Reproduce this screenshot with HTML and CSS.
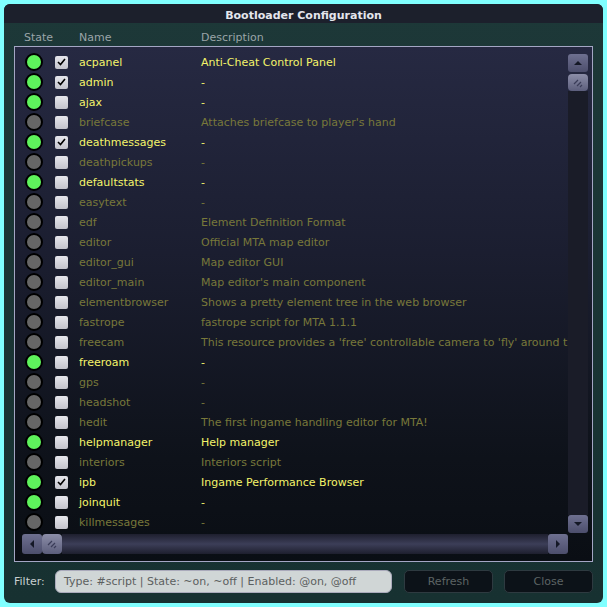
FILE: index.html
```html
<!DOCTYPE html>
<html>
<head>
<meta charset="utf-8">
<link rel="stylesheet" href="styles.css">
</head>
<body>
<div class="window">
  <div class="titlebar">Bootloader Configuration</div>
  <div class="content">
    <div class="colheads">
      <span class="h-state">State</span>
      <span class="h-name">Name</span>
      <span class="h-desc">Description</span>
    </div>
    <div class="gridbox">
      <div class="list" id="list"></div>
      <div class="vscroll">
        <div class="sbtn up"><svg width="10" height="6" viewBox="0 0 10 6"><path d="M1 5 L5 1 L9 5 Z" fill="#141826"/></svg></div>
        <div class="thumb"><svg width="12" height="10" viewBox="0 0 12 10"><path d="M2 6 L6 2 M5 8 L9 4 M8 9 L10 7" stroke="#3a3c58" stroke-width="1.2"/></svg></div>
        <div class="track"></div>
        <div class="sbtn down"><svg width="10" height="6" viewBox="0 0 10 6"><path d="M1 1 L5 5 L9 1 Z" fill="#141826"/></svg></div>
      </div>
      <div class="hscroll">
        <div class="hbtn left"><svg width="6" height="10" viewBox="0 0 6 10"><path d="M5 1 L1 5 L5 9 Z" fill="#141826"/></svg></div>
        <div class="hthumb"><svg width="12" height="10" viewBox="0 0 12 10"><path d="M2 6 L6 2 M5 8 L9 4 M8 9 L10 7" stroke="#3a3c58" stroke-width="1.2"/></svg></div>
        <div class="htrack"></div>
        <div class="hbtn right"><svg width="6" height="10" viewBox="0 0 6 10"><path d="M1 1 L5 5 L1 9 Z" fill="#141826"/></svg></div>
      </div>
    </div>
    <div class="bottom">
      <span class="flabel">Filter:</span>
      <div class="filter">Type: #script | State: ~on, ~off | Enabled: @on, @off</div>
      <div class="btn">Refresh</div>
      <div class="btn">Close</div>
    </div>
  </div>
</div>
<script src="app.js"></script>
</body>
</html>
```
FILE: app.js
```js
var rows = [
  ["acpanel", "Anti-Cheat Control Panel", 1, 1],
  ["admin", "-", 1, 1],
  ["ajax", "-", 1, 0],
  ["briefcase", "Attaches briefcase to player's hand", 0, 0],
  ["deathmessages", "-", 1, 1],
  ["deathpickups", "-", 0, 0],
  ["defaultstats", "-", 1, 0],
  ["easytext", "-", 0, 0],
  ["edf", "Element Definition Format", 0, 0],
  ["editor", "Official MTA map editor", 0, 0],
  ["editor_gui", "Map editor GUI", 0, 0],
  ["editor_main", "Map editor's main component", 0, 0],
  ["elementbrowser", "Shows a pretty element tree in the web browser", 0, 0],
  ["fastrope", "fastrope script for MTA 1.1.1", 0, 0],
  ["freecam", "This resource provides a 'free' controllable camera to 'fly' around the map", 0, 0],
  ["freeroam", "-", 1, 0],
  ["gps", "-", 0, 0],
  ["headshot", "-", 0, 0],
  ["hedit", "The first ingame handling editor for MTA!", 0, 0],
  ["helpmanager", "Help manager", 1, 0],
  ["interiors", "Interiors script", 0, 0],
  ["ipb", "Ingame Performance Browser", 1, 1],
  ["joinquit", "-", 1, 0],
  ["killmessages", "-", 0, 0]
];
var list = document.getElementById("list");
var check = '<svg width="9" height="8" viewBox="0 0 9 8"><path d="M1 4 L3.5 6.5 L8 1" fill="none" stroke="#000" stroke-width="1.6"/></svg>';
rows.forEach(function (r) {
  var row = document.createElement("div");
  row.className = "row " + (r[2] ? "on" : "off");
  row.innerHTML =
    '<span class="dot"></span>' +
    '<span class="cb">' + (r[3] ? check : "") + '</span>' +
    '<span class="name"></span>' +
    '<span class="desc"></span>';
  row.querySelector(".name").textContent = r[0];
  row.querySelector(".desc").textContent = r[1];
  list.appendChild(row);
});
```
FILE: styles.css
```css
html, body {
  margin: 0;
  padding: 0;
}
body {
  background: #80ffff;
  width: 607px;
  height: 607px;
  padding: 4px;
  box-sizing: border-box;
  font-family: "DejaVu Sans", Tahoma, sans-serif;
  font-size: 11px;
}
.window {
  width: 599px;
  height: 599px;
  border-radius: 6px;
  overflow: hidden;
  display: flex;
  flex-direction: column;
  background: linear-gradient(#1d3838, #173131);
}
.titlebar {
  height: 19px;
  flex: none;
  box-sizing: border-box;
  padding-top: 3px;
  background: #1c202c;
  color: #e4e6ec;
  font-weight: bold;
  font-size: 11px;
  display: flex;
  align-items: center;
  justify-content: center;
}
.content {
  flex: 1;
  display: flex;
  flex-direction: column;
  padding: 0 10px;
}
.colheads {
  height: 23px;
  display: flex;
  align-items: center;
  color: #9aa4a8;
  padding-top: 5px;
  box-sizing: border-box;
}
.h-state { width: 65px; padding-left: 10px; box-sizing: border-box; }
.h-name { width: 122px; }
.gridbox {
  height: 516px;
  box-sizing: border-box;
  border: 1px solid #a4a6c4;
  background: linear-gradient(#262942 0%, #1b1e30 40%, #0e121a 80%, #0a0e14 100%);
  display: grid;
  grid-template-columns: 1fr 20px;
  grid-template-rows: 482px 20px;
  padding: 5px 4px 7px 0;
  overflow: hidden;
}
.list {
  grid-column: 1;
  grid-row: 1;
  overflow: hidden;
  min-width: 0;
}
.row {
  height: 20px;
  display: flex;
  align-items: center;
  white-space: nowrap;
}
.dot {
  flex: none;
  width: 14px;
  height: 14px;
  border: 2px solid #000;
  border-radius: 50%;
  margin-left: 10px;
  background: #666;
}
.on .dot { background: #5ef35c; }
.cb {
  flex: none;
  width: 13px;
  height: 13px;
  margin-left: 12px;
  border-radius: 2px;
  background: linear-gradient(#e6e6ec, #c4c4cc);
  display: flex;
  align-items: center;
  justify-content: center;
}
.name {
  flex: none;
  width: 122px;
  margin-left: 11px;
  color: #78783a;
}
.desc {
  color: #78783a;
}
.on .name, .on .desc { color: #f4f46a; }
.vscroll {
  grid-column: 2;
  grid-row: 1;
  display: flex;
  flex-direction: column;
  margin-top: 2px;
  margin-bottom: 1px;
}
.sbtn, .hbtn {
  flex: none;
  background: linear-gradient(#6e7090, #4c4e6c);
  border-radius: 3px;
  display: flex;
  align-items: center;
  justify-content: center;
}
.sbtn { height: 18px; }
.hbtn { width: 20px; }
.thumb, .hthumb {
  flex: none;
  background: linear-gradient(#8c8ea8, #5c5e7c);
  border-radius: 4px;
  display: flex;
  align-items: center;
  justify-content: center;
}
.thumb { height: 17px; margin-top: 2px; }
.hthumb { width: 20px; }
.track {
  flex: 1;
  background: #1a1c28;
}
.hscroll {
  grid-column: 1;
  grid-row: 2;
  margin-left: 7px;
  display: flex;
}
.htrack {
  flex: 1;
  background: linear-gradient(#1e1f2e, #3c3e58 50%, #1e1f2e);
}
.bottom {
  flex: 1;
  display: flex;
  align-items: center;
  padding-bottom: 2px;
}
.flabel {
  color: #c8d0d0;
  width: 41px;
  font-size: 11px;
}
.filter {
  width: 337px;
  height: 23px;
  box-sizing: border-box;
  background: #d0d6d6;
  border-radius: 6px;
  color: #5c6060;
  padding-left: 8px;
  display: flex;
  align-items: center;
  font-size: 11px;
  border: 1px solid #aab;
}
.btn {
  width: 89px;
  height: 23px;
  box-sizing: border-box;
  margin-left: 12px;
  background: #0c1218;
  border: 1px solid #2e3a40;
  border-radius: 5px;
  color: #5c6464;
  display: flex;
  align-items: center;
  justify-content: center;
}
.btn + .btn { margin-left: 11px; }
```
